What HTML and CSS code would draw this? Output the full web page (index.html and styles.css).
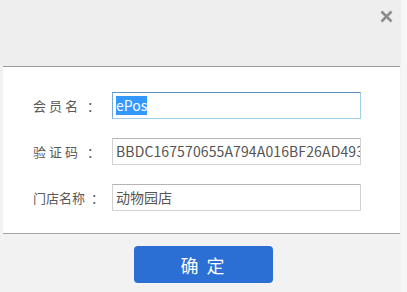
FILE: index.html
```html
<!DOCTYPE html>
<html lang="zh">
<head>
<meta charset="utf-8">
<title>会员登录</title>
<link rel="stylesheet" href="styles.css">
</head>
<body>
<div class="dialog">
  <div class="header">
    <span class="close" aria-label="关闭">
      <svg width="13" height="13" viewBox="0 0 13 13"><path d="M1.5 1.5 L11.5 11.5 M11.5 1.5 L1.5 11.5" stroke="#8c8c8c" stroke-width="2.6" stroke-linecap="butt"/></svg>
    </span>
  </div>
  <div class="content">
    <div class="row">
      <span class="label spaced">会员名 ：</span>
      <div class="field focused"><span class="sel">ePos</span></div>
    </div>
    <div class="row">
      <span class="label spaced">验证码 ：</span>
      <div class="field code">BBDC167570655A794A016BF26AD4931</div>
    </div>
    <div class="row">
      <span class="label">门店名称<span class="colon">：</span></span>
      <div class="field">动物园店</div>
    </div>
  </div>
  <div class="footer">
    <button class="btn">确 定</button>
  </div>
</div>
</body>
</html>
```
FILE: styles.css
```css
html, body {
  margin: 0;
  padding: 0;
}
body {
  width: 407px;
  height: 292px;
  background: #f6f6f6;
  font-family: "Noto Sans CJK SC", "Liberation Sans", sans-serif;
  overflow: hidden;
}
.dialog {
  width: 401px;
  height: 292px;
  background: #f2f2f2;
  display: flex;
  flex-direction: column;
}
.header {
  height: 66px;
  background: #eeeeee;
  display: flex;
  justify-content: flex-end;
  align-items: flex-start;
}
.close {
  display: block;
  width: 13px;
  height: 13px;
  margin: 10px 8px 0 0;
}
.close svg {
  display: block;
}
.content {
  margin: 0 1px 0 3px;
  background: #ffffff;
  border-top: 1px solid #9c9c9c;
  border-bottom: 1px solid #a4a4a4;
  padding: 25px 0 0 30px;
  box-sizing: border-box;
  height: 168px;
  display: flex;
  flex-direction: column;
  gap: 19px;
}
.row {
  display: flex;
  align-items: center;
  height: 27px;
}
.label {
  width: 79px;
  flex: none;
  font-size: 13px;
  color: #5a5a5a;
  white-space: pre;
}
.label.spaced {
  letter-spacing: 3px;
}
.colon {
  margin-left: 6px;
}
.field {
  width: 249px;
  height: 27px;
  box-sizing: border-box;
  border: 1px solid #d2d2d2;
  border-top-color: #b4b4b4;
  padding: 0 0 0 3px;
  font-size: 14px;
  line-height: 25px;
  color: #555555;
  overflow: hidden;
  white-space: nowrap;
  background: #fff;
}
.field.code {
  letter-spacing: 0.12px;
}
.field.focused {
  border-color: #9fd0ea;
  border-top-color: #5a8fc7;
  border-left-color: #7aaad8;
}
.sel {
  background: #3399ff;
  color: #ffffff;
  display: inline-block;
  line-height: 19px;
  padding: 0;
}
.footer {
  flex: 1;
  padding: 12px 0 0 134px;
  background: #f2f2f2;
}
.btn {
  width: 139px;
  height: 37px;
  border: none;
  border-radius: 4px;
  background: #2b6fd4;
  color: #ffffff;
  font-family: "Noto Sans CJK SC", sans-serif;
  font-size: 18px;
  letter-spacing: 2px;
  padding: 0;
  display: block;
}
```
